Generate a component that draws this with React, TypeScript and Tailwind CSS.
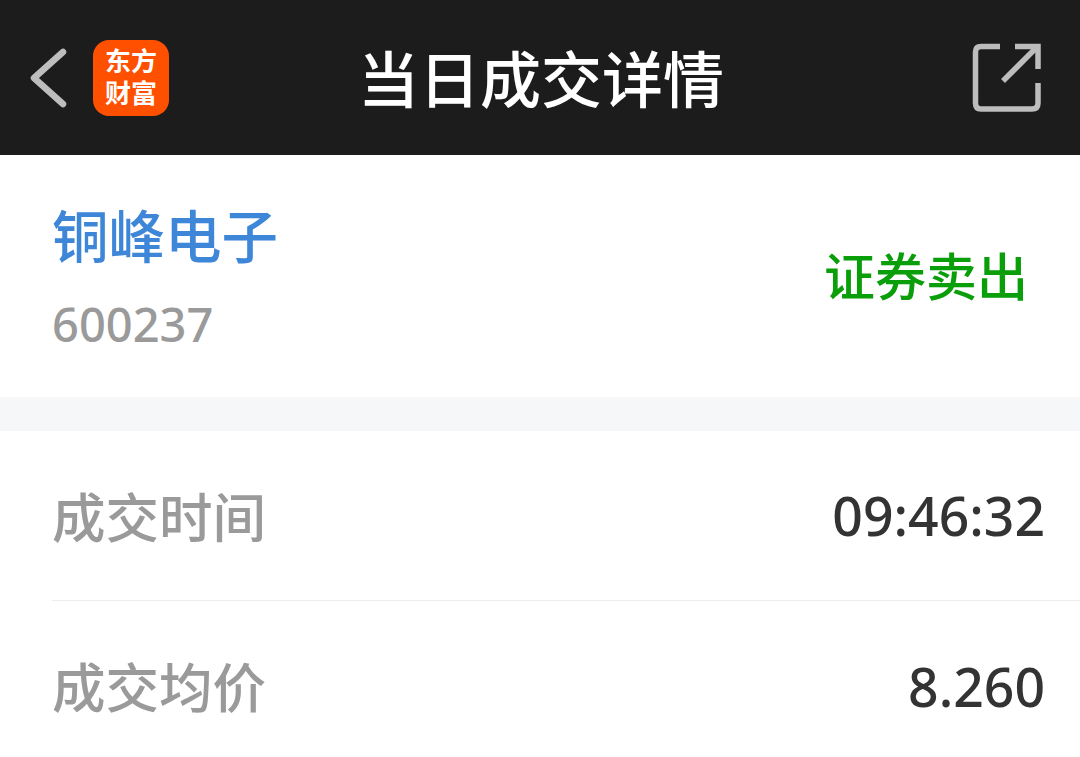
const cjk = "font-['Noto_Sans','Noto_Sans_CJK_SC',sans-serif]";

const rows = [
  { label: "成交时间", value: "09:46:32" },
  { label: "成交均价", value: "8.260" },
];

export default function App() {
  return (
    <div className={`h-[757px] w-[1080px] overflow-hidden bg-white ${cjk}`}>
      {/* Header */}
      <div className="flex h-[155px] items-center justify-between bg-[#1c1c1c] pr-[38px] pl-[30px]">
        <div className="flex w-[210px] items-center gap-[26px]">
          <svg width="37" height="62" viewBox="0 0 37 62" fill="none">
            <path d="M33 5 L4 31 L33 57" stroke="#bdbdbd" strokeWidth="6.5" strokeLinecap="round" strokeLinejoin="round" />
          </svg>
          <div className="flex h-[76px] w-[76px] flex-col items-center justify-center rounded-[16px] bg-[#ff5000] font-['Inter','Noto_Sans_CJK_SC',sans-serif] text-[26px] leading-[32px] font-bold text-white">
            <div>东方</div>
            <div>财富</div>
          </div>
        </div>
        <div className="pt-[4px] text-[61px] leading-none font-medium text-white">当日成交详情</div>
        <div className="flex w-[200px] justify-end">
          <svg width="70" height="70" viewBox="0 0 70 70" fill="none" stroke="#bdbdbd" strokeWidth="5.5">
            <path d="M28 3.5 H9 Q3.5 3.5 3.5 9 V60 Q3.5 66 9 66 H60 Q66 66 66 60 V40" />
            <path d="M43 3.5 H66 V26" />
            <path d="M64 5 L31 38" />
          </svg>
        </div>
      </div>

      {/* Stock */}
      <div className="flex h-[242px] items-center justify-between px-[52px]">
        <div className="flex flex-col gap-[29px] pt-[3px]">
          <div className="text-[56.5px] leading-[64px] font-medium text-[#3d86d8]">铜峰电子</div>
          <div className="text-[47px] leading-[52px] font-medium text-[#9a9a9a]">600237</div>
        </div>
        <div className="pt-[1px] text-[51px] leading-none font-medium text-[#0a9e0a]">证券卖出</div>
      </div>

      <div className="h-[34px] bg-[#f6f7f9]" />

      {/* Rows */}
      {rows.map((row, i) => (
        <div key={row.label} className="pl-[52px]">
          <div className={`flex h-[170px] items-center justify-between pr-[35px] ${i === 0 ? "border-b border-[#ececec]" : ""}`}>
            <div className="pt-[4px] text-[53.5px] leading-none font-medium text-[#9a9a9a]">{row.label}</div>
            <div className="pt-[1px] text-[53.5px] leading-none font-medium text-[#333333]">{row.value}</div>
          </div>
        </div>
      ))}
    </div>
  );
}
